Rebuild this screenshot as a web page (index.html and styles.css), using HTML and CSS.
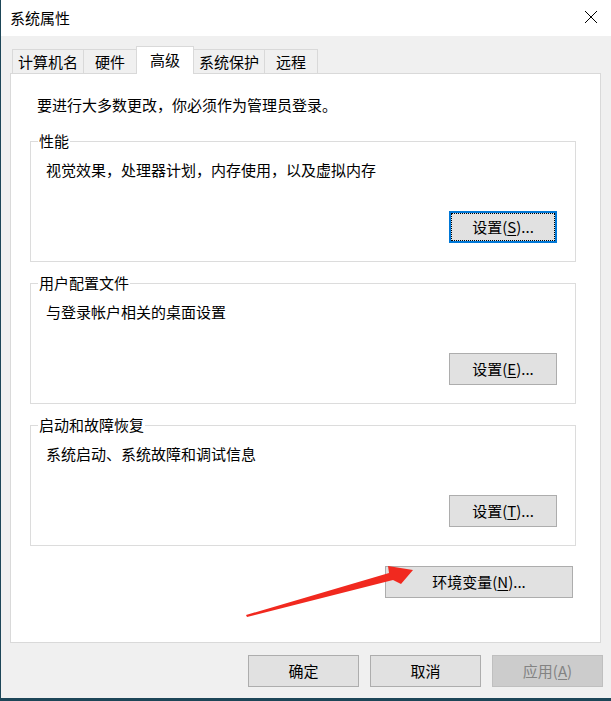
FILE: index.html
```html
<!DOCTYPE html>
<html lang="zh-CN">
  <head>
    <meta charset="UTF-8" />
    <title>系统属性</title>
    <link rel="stylesheet" href="styles.css">
  </head>
  <body>
    <div class="window">
      <div class="titlebar">
        <span class="title">系统属性</span>
        <svg class="close" width="14" height="14" viewBox="0 0 14 14">
          <path d="M1 1 L13 13 M13 1 L1 13" stroke="#000" stroke-width="1" fill="none" />
        </svg>
      </div>
      <div class="dialog">
        <div class="tabs">
          <div class="tab">计算机名</div>
          <div class="tab">硬件</div>
          <div class="tab active">高级</div>
          <div class="tab">系统保护</div>
          <div class="tab">远程</div>
        </div>
        <div class="panel">
          <p class="intro">要进行大多数更改，你必须作为管理员登录。</p>
          <fieldset class="group">
            <legend>性能</legend>
            <p class="group-text">视觉效果，处理器计划，内存使用，以及虚拟内存</p>
            <div class="group-actions">
              <button class="btn btn-small btn-default"><span>设置(<u>S</u>)...</span></button>
            </div>
          </fieldset>
          <fieldset class="group">
            <legend>用户配置文件</legend>
            <p class="group-text">与登录帐户相关的桌面设置</p>
            <div class="group-actions">
              <button class="btn btn-small">设置(<u>E</u>)...</button>
            </div>
          </fieldset>
          <fieldset class="group">
            <legend>启动和故障恢复</legend>
            <p class="group-text">系统启动、系统故障和调试信息</p>
            <div class="group-actions">
              <button class="btn btn-small">设置(<u>T</u>)...</button>
            </div>
          </fieldset>
          <div class="panel-actions">
            <button class="btn btn-env">环境变量(<u>N</u>)...</button>
          </div>
        </div>
        <div class="footer">
          <button class="btn btn-footer">确定</button>
          <button class="btn btn-footer">取消</button>
          <button class="btn btn-footer" disabled>应用(<u>A</u>)</button>
        </div>
      </div>
    </div>

    <!-- 标注箭头 -->
    <svg class="arrow" width="611" height="701" viewBox="0 0 611 701">
      <polygon points="246,615 389,573 388,566 413,570 401,584 393,580 247,617" fill="#f1291f" />
    </svg>
  </body>
</html>
```

FILE: styles.css
```css
body {
  margin: 0;
  width: 611px;
  height: 701px;
  background-color: #1d4658;
  font-family: "Noto Sans CJK SC", "Microsoft YaHei", sans-serif;
  font-size: 15px;
  color: #000;
  position: relative;
  overflow: hidden;
}
.window {
  margin-left: 1px;
  width: 610px;
  height: 698px;
  background-color: #f0f0f0;
  display: flex;
  flex-direction: column;
}
.titlebar {
  height: 36px;
  background-color: #fff;
  display: flex;
  justify-content: space-between;
  align-items: center;
  padding: 0 13px 0 9px;
}
.title {
  line-height: 20px;
}
.close {
  display: block;
  margin-top: -2px;
}
.dialog {
  flex: 1;
  padding: 10px 10px 0 9px;
  display: flex;
  flex-direction: column;
}
.tabs {
  display: flex;
  align-items: flex-end;
  padding-left: 2px;
  height: 28px;
  margin-bottom: -1px;
}
.tab {
  box-sizing: border-box;
  height: 25px;
  min-width: 54px;
  padding: 0 5px;
  border: 1px solid #d9d9d9;
  border-bottom: none;
  margin-right: -1px;
  background-color: #f0f0f0;
  text-align: center;
  line-height: 24px;
}
.tab.active {
  height: 28px;
  min-width: 58px;
  background-color: #fff;
  line-height: 26px;
  position: relative;
  z-index: 1;
}
.panel {
  box-sizing: border-box;
  height: 570px;
  background-color: #fff;
  border: 1px solid #d9d9d9;
  padding: 21px 24px 0 19px;
}
.intro {
  margin: 0 0 0 7px;
  line-height: 20px;
}
.group {
  margin: 11px 0 0 0;
  padding: 9px 18px 18px 15px;
  border: 1px solid #dcdcdc;
  min-inline-size: 0;
}
.panel .intro + .group {
  margin-top: 16px;
}
.group legend {
  padding: 0 1px;
  margin-left: -8px;
  line-height: 20px;
}
.group-text {
  margin: 0;
  line-height: 20px;
}
.group-actions {
  display: flex;
  justify-content: flex-end;
  margin-top: 31px;
}
.btn {
  box-sizing: border-box;
  height: 32px;
  background-color: #e1e1e1;
  border: 1px solid #adadad;
  border-radius: 0;
  font-family: inherit;
  font-size: 15px;
  color: #000;
  padding: 0;
  line-height: 28px;
}
.btn u {
  text-decoration-thickness: 1px;
  text-underline-offset: 2px;
}
.btn-small {
  width: 108px;
}
.btn-default {
  border: 2px solid #0078d7;
  outline: 1px dotted #000;
  outline-offset: -3px;
}
.panel-actions {
  display: flex;
  justify-content: flex-end;
  margin-top: 20px;
  padding-right: 3px;
}
.btn-env {
  width: 188px;
}
.footer {
  display: flex;
  justify-content: flex-end;
  gap: 11px;
  margin-top: 12px;
  margin-right: -2px;
}
.btn-footer {
  width: 111px;
}
.btn-footer:disabled {
  background-color: #cccccc;
  border-color: #bfbfbf;
  color: #838383;
}
.arrow {
  position: absolute;
  left: 0;
  top: 0;
  pointer-events: none;
}
```
